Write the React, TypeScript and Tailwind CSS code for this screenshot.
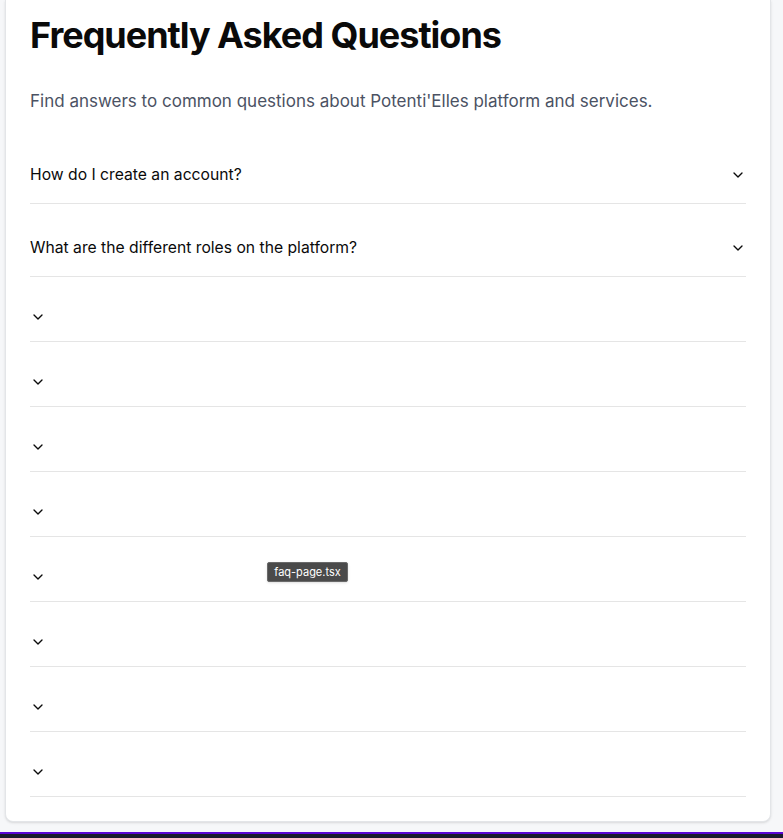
import React, { useState } from 'react';
import { ChevronDown } from 'lucide-react';

const faqs: { q: string; a: string }[] = [
  { q: 'How do I create an account?', a: 'Click on "Sign up" and follow the steps to create your account.' },
  { q: 'What are the different roles on the platform?', a: 'Members, mentors and administrators each have their own space.' },
  { q: '', a: '' },
  { q: '', a: '' },
  { q: '', a: '' },
  { q: '', a: '' },
  { q: '', a: '' },
  { q: '', a: '' },
  { q: '', a: '' },
  { q: '', a: '' },
];

export default function App() {
  const [open, setOpen] = useState<number | null>(null);

  return (
    <div className="min-h-screen bg-[#f6f7f9] font-['Inter',sans-serif] relative">
      <div className="pl-[5px] pr-[12px]">
        <div className="bg-white border-x border-b border-[#e3e5e8] rounded-b-lg shadow-sm px-6 pt-[15px] pb-6">
          <h1 className="text-4xl font-bold text-[#0a0a0a] tracking-[-0.028em] mb-8">Frequently Asked Questions</h1>
          <p className="text-[17px] leading-7 text-[#4b5263] mb-4">Find answers to common questions about Potenti'Elles platform and services.</p>

          <div>
            {faqs.map((item, i) => (
              <div key={i} className="border-b border-[#e5e5e5]">
                <button
                  onClick={() => setOpen(open === i ? null : i)}
                  className="w-full flex items-center justify-between pt-8 pb-4 text-[15.7px] leading-6 text-left text-[#0a0a0a]"
                >
                  {item.q && <span>{item.q}</span>}
                  <ChevronDown className={`w-4 h-4 shrink-0 text-[#0a0a0a] transition-transform ${open === i ? 'rotate-180' : ''}`} />
                </button>
                {open === i && item.a && <div className="pb-4 text-sm text-gray-600">{item.a}</div>}
              </div>
            ))}
          </div>
        </div>
      </div>

      <footer className="mt-[10px] border-t-2 border-[#5a06d4] bg-[#1b1a2c] h-10" />

      <div className="absolute left-[267px] top-[562px] w-[81px] h-[20px] flex items-center justify-center bg-[#4a4a4a] border border-[#6a6a6a] rounded-[2px] shadow text-[11px] text-white">
        faq-page.tsx
      </div>
    </div>
  );
}
